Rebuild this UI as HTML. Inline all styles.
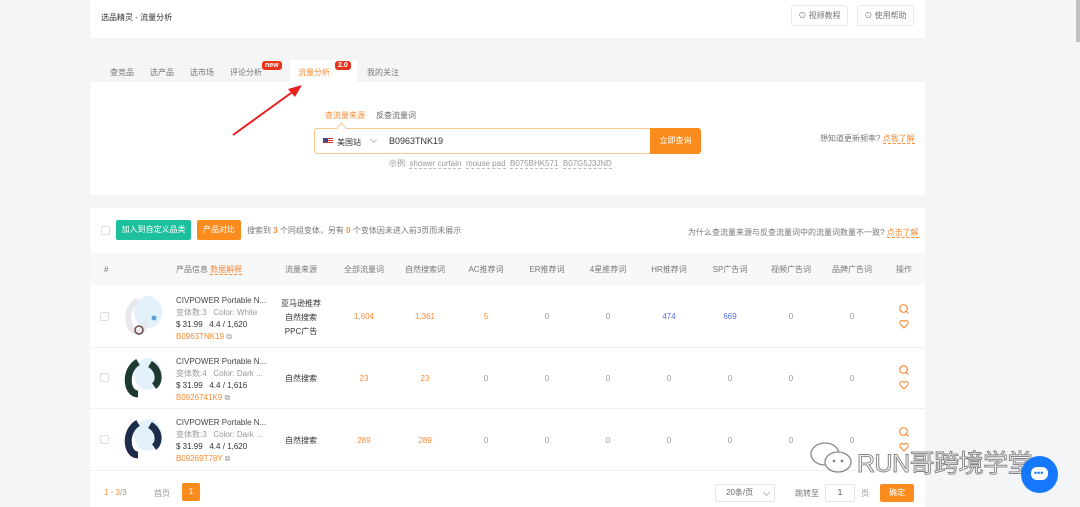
<!DOCTYPE html>
<html><head><meta charset="utf-8"><style>
*{margin:0;padding:0;box-sizing:border-box}
body{width:1080px;height:507px;background:#f4f5f7;font-family:"Liberation Sans","Noto Sans CJK SC",sans-serif;font-size:8px;color:#555;position:relative;overflow:hidden}
.a{position:absolute;white-space:nowrap}
.w{background:#fff;position:absolute}
.o{color:#fa8c35}
.g{color:#999}
.c{transform:translateX(-50%)}
.cb{position:absolute;width:9px;height:9px;border:1px solid #ddd;border-radius:2px;background:#fff}
.btn{position:absolute;border:1px solid #e8e8e8;border-radius:3px;background:#fff;color:#777;text-align:center}
.ul{border-bottom:1px dashed #bbb}
.hr{position:absolute;left:90px;width:835px;height:1px;background:#eef0f3}
.chev{position:absolute;width:5px;height:5px;border-right:1px solid #bbb;border-bottom:1px solid #bbb;transform:rotate(45deg)}
</style></head><body>
<div class="w" style="left:90px;top:0;width:835px;height:38px"></div>
<div class="a" style="left:101px;top:12px;font-size:8px;color:#333">选品精灵 - 流量分析</div>
<div class="btn" style="left:791px;top:5px;width:57px;height:21px;line-height:19px">⊙ 视频教程</div>
<div class="btn" style="left:857px;top:5px;width:57px;height:21px;line-height:19px">⊙ 使用帮助</div>

<div class="w" style="left:290px;top:60px;width:67px;height:22px"></div>
<div class="a g" style="left:110px;top:67px;color:#777">查竞品</div>
<div class="a g" style="left:150px;top:67px;color:#777">选产品</div>
<div class="a g" style="left:190px;top:67px;color:#777">选市场</div>
<div class="a g" style="left:230px;top:67px;color:#777">评论分析</div>
<div class="a" style="left:262px;top:61px;background:#e8341c;color:#fff;font-size:7px;font-weight:bold;padding:0 3px;border-radius:3px;line-height:9px">new</div>
<div class="a o" style="left:298px;top:67px">流量分析</div>
<div class="a" style="left:335px;top:61px;background:#e8341c;color:#fff;font-size:7px;font-weight:bold;padding:0 3px;border-radius:3px;line-height:9px">2.0</div>
<div class="a" style="left:367px;top:67px;color:#777">我的关注</div>

<div class="w" style="left:90px;top:82px;width:835px;height:113px"></div>
<svg class="a" style="left:228px;top:80px" width="80" height="60"><line x1="5" y1="55" x2="70" y2="8" stroke="#e82020" stroke-width="2"/><polygon points="74,5 60,9 67,17" fill="#e82020"/></svg>
<div class="a o" style="left:325px;top:110px">查流量来源</div>
<div class="a" style="left:376px;top:110px;color:#666">反查流量词</div>
<div class="a" style="left:314px;top:128px;width:336px;height:26px;border:1px solid #fbc78f;border-right:none;border-radius:3px 0 0 3px;background:#fff"></div>
<div class="a" style="left:338px;top:124px;width:7px;height:7px;border-left:1px solid #fbc78f;border-top:1px solid #fbc78f;background:#fff;transform:rotate(45deg)"></div>
<div class="a" style="left:323px;top:138px;width:10px;height:7px;background:linear-gradient(#c33 0 15%,#fff 15% 30%,#c33 30% 45%,#fff 45% 60%,#c33 60% 75%,#fff 75%)"><div style="width:5px;height:4px;background:#3b4a8a"></div></div>
<div class="a" style="left:337px;top:137px;color:#333">美国站</div>
<div class="chev" style="left:371px;top:137px"></div>
<div class="a" style="left:389px;top:136px;color:#333;font-size:9px">B0963TNK19</div>
<div class="a" style="left:650px;top:128px;width:51px;height:26px;background:#fa8c1e;color:#fff;text-align:center;line-height:26px;border-radius:0 3px 3px 0">立即查询</div>
<div class="a g" style="left:389px;top:158px">示例: <span class="ul">shower curtain</span>&nbsp; <span class="ul">mouse pad</span>&nbsp; <span class="ul">B075BHK571</span>&nbsp; <span class="ul">B07G5J3JND</span></div>
<div class="a" style="left:820px;top:133px;color:#777">想知道更新频率? <span class="o ul" style="border-color:#fa8c35">点我了解</span></div>

<div class="w" style="left:90px;top:208px;width:835px;height:299px"></div>
<div class="cb" style="left:101px;top:226px"></div>
<div class="a" style="left:116px;top:220px;width:75px;height:20px;background:#1cc09d;color:#fff;text-align:center;line-height:20px;border-radius:2px">加入到自定义品类</div>
<div class="a" style="left:197px;top:220px;width:44px;height:20px;background:#fa8c1e;color:#fff;text-align:center;line-height:20px;border-radius:2px">产品对比</div>
<div class="a" style="left:247px;top:225px;color:#777">搜索到 <b class="o">3</b> 个同组变体，另有 <b class="o">0</b> 个变体因未进入前3页而未展示</div>
<div class="a" style="left:688px;top:227px;color:#777">为什么查流量来源与反查流量词中的流量词数量不一致? <span class="o ul" style="border-color:#fa8c35">点击了解</span></div>

<div class="a" style="left:90px;top:253px;width:835px;height:32px;background:#f7f8fa"></div>
<div class="a" style="left:104px;top:265px;color:#777">#</div>
<div class="a" style="left:176px;top:264px;color:#777">产品信息 <span class="o ul" style="border-color:#fa8c35">数据解释</span></div>
<div class="a c" style="left:301px;top:264px;color:#777">流量来源</div>
<div class="a c" style="left:364px;top:264px;color:#777">全部流量词</div>
<div class="a c" style="left:425px;top:264px;color:#777">自然搜索词</div>
<div class="a c" style="left:486px;top:264px;color:#777">AC推荐词</div>
<div class="a c" style="left:547px;top:264px;color:#777">ER推荐词</div>
<div class="a c" style="left:608px;top:264px;color:#777">4星推荐词</div>
<div class="a c" style="left:669px;top:264px;color:#777">HR推荐词</div>
<div class="a c" style="left:730px;top:264px;color:#777">SP广告词</div>
<div class="a c" style="left:791px;top:264px;color:#777">视频广告词</div>
<div class="a c" style="left:852px;top:264px;color:#777">品牌广告词</div>
<div class="a c" style="left:904px;top:264px;color:#777">操作</div>

<div class="hr" style="top:347px"></div>
<div class="hr" style="top:408px"></div>
<div class="hr" style="top:470px"></div>

<div class="cb" style="left:100px;top:312px"></div>
<div class="cb" style="left:100px;top:373px"></div>
<div class="cb" style="left:100px;top:435px"></div>

<svg class="a" style="left:124px;top:294px" width="40" height="45"><ellipse cx="24" cy="18" rx="14" ry="16" fill="#e3f1fb"/><path d="M14 6 C0 14 2 38 14 38 C20 38 22 30 20 28" fill="none" stroke="#e8e8ee" stroke-width="6"/><circle cx="15" cy="36" r="4" fill="none" stroke="#6a4a4a" stroke-width="1.5"/><circle cx="30" cy="24" r="2.5" fill="#5aa3d8"/></svg>
<svg class="a" style="left:124px;top:356px" width="40" height="45"><ellipse cx="24" cy="18" rx="14" ry="16" fill="#e3f1fb"/><path d="M14 6 C0 14 2 38 14 38 M26 8 C36 14 36 26 30 30" fill="none" stroke="#1e3a30" stroke-width="7"/></svg>
<svg class="a" style="left:124px;top:417px" width="40" height="45"><ellipse cx="24" cy="18" rx="14" ry="16" fill="#e3f1fb"/><path d="M14 6 C0 14 2 38 14 38 M26 8 C36 14 36 26 30 30" fill="none" stroke="#1d2c4a" stroke-width="7"/></svg>

<div class="a" style="left:176px;top:295px;color:#444;font-size:8px;line-height:12px">CIVPOWER Portable N...<br><span class="g">变体数:3 &nbsp; Color: White</span><br><span style="color:#333">$ 31.99 &nbsp; 4.4 / 1,620</span><br><span class="o">B0963TNK19 <span class="g">⧉</span></span></div>
<div class="a" style="left:176px;top:356px;color:#444;font-size:8px;line-height:12px">CIVPOWER Portable N...<br><span class="g">变体数:4 &nbsp; Color: Dark ...</span><br><span style="color:#333">$ 31.99 &nbsp; 4.4 / 1,616</span><br><span class="o">B0926741K9 <span class="g">⧉</span></span></div>
<div class="a" style="left:176px;top:417px;color:#444;font-size:8px;line-height:12px">CIVPOWER Portable N...<br><span class="g">变体数:3 &nbsp; Color: Dark ...</span><br><span style="color:#333">$ 31.99 &nbsp; 4.4 / 1,620</span><br><span class="o">B09269T78Y <span class="g">⧉</span></span></div>

<div class="a c" style="left:301px;top:297px;color:#333;line-height:14px;text-align:center">亚马逊推荐<br>自然搜索<br>PPC广告</div>
<div class="a c" style="left:301px;top:373px;color:#333">自然搜索</div>
<div class="a c" style="left:301px;top:435px;color:#333">自然搜索</div>

<div class="a c o" style="left:364px;top:312px">1,604</div><div class="a c o" style="left:425px;top:312px">1,361</div><div class="a c o" style="left:486px;top:312px">5</div>
<div class="a c g" style="left:547px;top:312px">0</div><div class="a c g" style="left:608px;top:312px">0</div>
<div class="a c" style="left:669px;top:312px;color:#5a6de0">474</div><div class="a c" style="left:730px;top:312px;color:#5a6de0">669</div>
<div class="a c g" style="left:791px;top:312px">0</div><div class="a c g" style="left:852px;top:312px">0</div>

<div class="a c o" style="left:364px;top:374px">23</div><div class="a c o" style="left:425px;top:374px">23</div>
<div class="a c g" style="left:486px;top:374px">0</div><div class="a c g" style="left:547px;top:374px">0</div><div class="a c g" style="left:608px;top:374px">0</div><div class="a c g" style="left:669px;top:374px">0</div><div class="a c g" style="left:730px;top:374px">0</div><div class="a c g" style="left:791px;top:374px">0</div><div class="a c g" style="left:852px;top:374px">0</div>

<div class="a c o" style="left:364px;top:436px">289</div><div class="a c o" style="left:425px;top:436px">289</div>
<div class="a c g" style="left:486px;top:436px">0</div><div class="a c g" style="left:547px;top:436px">0</div><div class="a c g" style="left:608px;top:436px">0</div><div class="a c g" style="left:669px;top:436px">0</div><div class="a c g" style="left:730px;top:436px">0</div><div class="a c g" style="left:791px;top:436px">0</div><div class="a c g" style="left:852px;top:436px">0</div>

<svg class="a" style="left:898px;top:303px" width="12" height="30"><circle cx="5.5" cy="5.5" r="3.8" fill="none" stroke="#fa8c35" stroke-width="1.2"/><line x1="8.5" y1="8.5" x2="10.5" y2="10.5" stroke="#fa8c35" stroke-width="1.2"/><path d="M6 25 L2.2 21 A2 2 0 0 1 6 18.5 A2 2 0 0 1 9.8 21 Z" fill="none" stroke="#fa8c35" stroke-width="1.1"/></svg>
<svg class="a" style="left:898px;top:364px" width="12" height="30"><circle cx="5.5" cy="5.5" r="3.8" fill="none" stroke="#fa8c35" stroke-width="1.2"/><line x1="8.5" y1="8.5" x2="10.5" y2="10.5" stroke="#fa8c35" stroke-width="1.2"/><path d="M6 25 L2.2 21 A2 2 0 0 1 6 18.5 A2 2 0 0 1 9.8 21 Z" fill="none" stroke="#fa8c35" stroke-width="1.1"/></svg>
<svg class="a" style="left:898px;top:426px" width="12" height="30"><circle cx="5.5" cy="5.5" r="3.8" fill="none" stroke="#fa8c35" stroke-width="1.2"/><line x1="8.5" y1="8.5" x2="10.5" y2="10.5" stroke="#fa8c35" stroke-width="1.2"/><path d="M6 25 L2.2 21 A2 2 0 0 1 6 18.5 A2 2 0 0 1 9.8 21 Z" fill="none" stroke="#fa8c35" stroke-width="1.1"/></svg>

<div class="a" style="left:104px;top:488px"><span class="o">1 - 3</span><span class="g">/3</span></div>
<div class="a g" style="left:154px;top:488px">首页</div>
<div class="a" style="left:182px;top:483px;width:18px;height:18px;background:#fa8c1e;color:#fff;text-align:center;line-height:18px;border-radius:2px">1</div>
<div class="a" style="left:715px;top:484px;width:60px;height:18px;border:1px solid #e5e5e5;border-radius:2px;color:#666;padding-left:10px;line-height:16px">20条/页</div>
<div class="chev" style="left:764px;top:490px"></div>
<div class="a" style="left:795px;top:488px;color:#777">跳转至</div>
<div class="a" style="left:825px;top:484px;width:30px;height:18px;border:1px solid #e5e5e5;border-radius:2px;text-align:center;line-height:16px;color:#444">1</div>
<div class="a g" style="left:861px;top:488px">页</div>
<div class="a" style="left:880px;top:484px;width:34px;height:18px;background:#fa8c1e;color:#fff;text-align:center;line-height:18px;border-radius:2px">确定</div>

<svg class="a" style="left:808px;top:440px" width="48" height="36"><ellipse cx="17" cy="14" rx="14" ry="11" fill="#fff" stroke="#888" stroke-width="1.3"/><ellipse cx="30" cy="22" rx="13" ry="10" fill="#fff" stroke="#888" stroke-width="1.3"/><circle cx="26" cy="21" r="1.4" fill="#888"/><circle cx="34" cy="21" r="1.4" fill="#888"/></svg>
<div class="a" style="left:857px;top:444px;font-size:25px;color:#fff;-webkit-text-stroke:1px #888;font-family:'Liberation Sans','Noto Sans CJK SC',sans-serif;letter-spacing:-0.5px">RUN哥跨境学堂</div>
<div class="a" style="left:1021px;top:456px;width:37px;height:37px;border-radius:50%;background:#1677ff"><div style="position:absolute;left:10px;top:11px;width:17px;height:13px;background:#fff;border-radius:6px"></div><div style="position:absolute;left:13px;top:16px;font-size:9px;color:#1677ff;line-height:3px;letter-spacing:0">•••</div></div>
<div class="a" style="left:1076px;top:0;width:4px;height:42px;background:#c1c1c1"></div>
</body></html>
